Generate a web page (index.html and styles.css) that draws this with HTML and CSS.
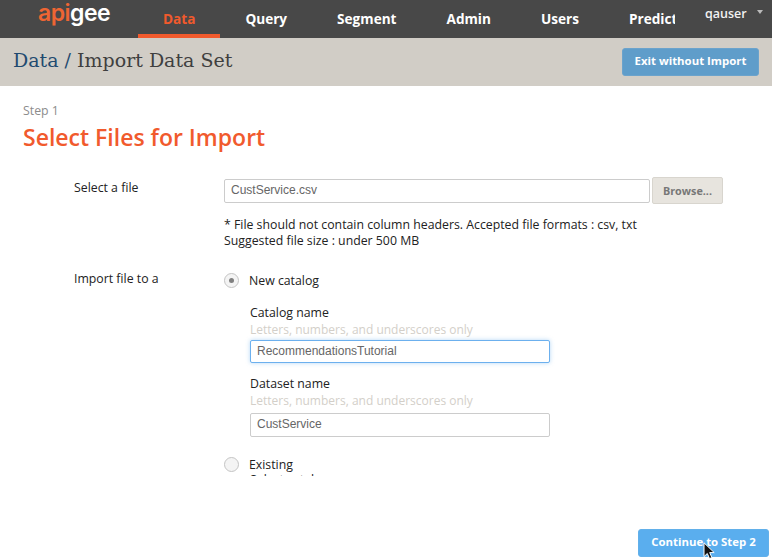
FILE: index.html
```html
<!DOCTYPE html>
<html>
  <head>
    <title>Import Data Set</title>
    <link rel="stylesheet" href="styles.css">
  </head>
  <body>
    <header class="topbar">
      <div class="logo"><span class="logo-api">api</span><span class="logo-gee">gee</span></div>
      <nav class="nav">
        <a class="nav-item active">Data</a>
        <a class="nav-item">Query</a>
        <a class="nav-item">Segment</a>
        <a class="nav-item">Admin</a>
        <a class="nav-item">Users</a>
        <a class="nav-item">Predict</a>
      </nav>
      <div class="user">qauser<span class="caret"></span></div>
    </header>

    <div class="subbar">
      <h2 class="crumbs"><span class="crumb-link">Data /</span> Import Data Set</h2>
      <button class="btn btn-exit">Exit without Import</button>
    </div>

    <main class="content">
      <p class="step">Step 1</p>
      <h1 class="title">Select Files for Import</h1>

      <div class="form-row file-row">
        <label class="row-label">Select a file</label>
        <div class="row-body">
          <div class="file-picker">
            <input class="text-input file-input" type="text" value="CustService.csv">
            <button class="browse">Browse...</button>
          </div>
          <p class="note">* File should not contain column headers. Accepted file formats : csv, txt<br>Suggested file size : under 500 MB</p>
        </div>
      </div>

      <div class="form-row">
        <label class="row-label">Import file to a</label>
        <div class="row-body">
          <div class="radio-row">
            <span class="radio checked"></span>
            <span>New catalog</span>
          </div>
          <div class="names">
            <div class="name-label">Catalog name</div>
            <div class="name-hint">Letters, numbers, and underscores only</div>
            <input class="text-input name-input focused" type="text" value="RecommendationsTutorial">
            <div class="name-label second">Dataset name</div>
            <div class="name-hint">Letters, numbers, and underscores only</div>
            <input class="text-input name-input dataset" type="text" value="CustService">
          </div>
          <div class="radio-row existing">
            <span class="radio"></span>
            <span>Existing</span>
          </div>
          <div class="name-label clipped">Select catalog</div>
        </div>
      </div>
    </main>

    <footer class="footer">
      <button class="btn btn-continue">Continue to Step 2</button>
      <svg class="cursor" width="12" height="18" viewBox="0 0 12 18">
        <path d="M1 0.8V14.6L4.3 11.5L6.5 16.6L8.9 15.6L6.7 10.6H11.2Z" fill="#111" stroke="#fff" stroke-width="1"/>
      </svg>
    </footer>
  </body>
</html>
```

FILE: styles.css
```css
html, body {
  margin: 0;
  height: 560px;
  overflow: hidden;
  background-color: #fff;
  font-family: "Open Sans", sans-serif;
  font-size: 12.3px;
  color: #222;
}

.topbar {
  display: flex;
  height: 38px;
  background-color: #484848;
  position: relative;
}

.logo {
  width: 138px;
  padding-left: 38px;
  box-sizing: border-box;
  font-family: "Inter", sans-serif;
  font-size: 23px;
  font-weight: 600;
  letter-spacing: -0.5px;
  line-height: 27px;
}

.logo-api {
  color: #ee6533;
}

.logo-gee {
  color: #fff;
}

.nav {
  display: flex;
  width: 537px;
  overflow: hidden;
}

.nav-item {
  padding: 0 25px;
  height: 38px;
  box-sizing: border-box;
  line-height: 38px;
  font-size: 13.6px;
  font-weight: 700;
  color: #fff;
}

.nav-item.active {
  color: #f15a2d;
  border-bottom: 4px solid #f15a2d;
}

.user {
  margin-left: 30px;
  padding-top: 5px;
  font-size: 12.5px;
  font-weight: 600;
  line-height: 18px;
  color: #f2f2f2;
}

.caret {
  position: absolute;
  left: 757px;
  top: 10px;
  border-left: 3px solid transparent;
  border-right: 3px solid transparent;
  border-top: 4px solid #bbb;
}

.subbar {
  display: flex;
  justify-content: space-between;
  align-items: center;
  height: 48px;
  padding: 0 13px;
  background-color: #d1cdc6;
}

.crumbs {
  margin: 0 0 5px;
  font-family: "DejaVu Serif", serif;
  font-size: 19px;
  font-weight: 400;
  color: #3f3f3f;
}

.crumb-link {
  color: #1f4a70;
}

.btn {
  padding: 0 0 3px;
  border: 1px solid transparent;
  border-radius: 3px;
  font-family: "Open Sans", sans-serif;
  font-size: 11.4px;
  font-weight: 700;
  color: #fff;
}

.btn-exit {
  width: 137px;
  height: 28px;
  background-color: #5f9dca;
  border-color: #6ba3cc;
}

.content {
  height: 374px;
  padding: 16px 23px 0;
  overflow: hidden;
}

.step {
  margin: 0;
  line-height: 17px;
  color: #8c8c8c;
}

.title {
  margin: 3px 0 0;
  font-size: 23px;
  font-weight: 600;
  line-height: 30px;
  color: #f15a2d;
}

.form-row {
  display: flex;
  padding-left: 51px;
}

.file-row {
  margin-top: 27px;
}

.row-label {
  width: 150px;
  flex-shrink: 0;
  line-height: 17px;
}

.file-picker {
  display: flex;
  align-items: center;
  gap: 2px;
  margin-top: -2px;
}

.text-input {
  box-sizing: border-box;
  padding: 0 6px 2px;
  border: 1px solid #ccc;
  border-radius: 2px;
  font-family: "Liberation Sans", sans-serif;
  font-size: 12px;
  color: #666;
  outline: none;
}

.file-input {
  width: 426px;
  height: 24px;
}

.browse {
  width: 71px;
  height: 27px;
  padding: 0;
  background-color: #e7e4de;
  border: 1px solid #d8d5ce;
  border-radius: 2px;
  font-family: "Open Sans", sans-serif;
  font-size: 10.8px;
  font-weight: 700;
  color: #777;
}

.note {
  margin: 13px 0 0;
  line-height: 16px;
}

.form-row + .form-row {
  margin-top: 21px;
}

.radio-row {
  display: flex;
  align-items: center;
  gap: 10px;
  margin-top: 2px;
  line-height: 17px;
}

.radio {
  box-sizing: border-box;
  width: 15px;
  height: 15px;
  border: 1px solid #c4c4c4;
  border-radius: 50%;
  background-color: #f4f4f4;
  display: flex;
  align-items: center;
  justify-content: center;
}

.radio.checked::after {
  content: "";
  width: 5px;
  height: 5px;
  border-radius: 50%;
  background-color: #808080;
}

.names {
  margin: 15px 0 0 26px;
}

.name-label {
  line-height: 17px;
}

.name-label.second {
  margin-top: 12px;
}

.name-hint {
  font-size: 12px;
  line-height: 17px;
  color: #d3cfc9;
}

.name-input {
  display: block;
  width: 300px;
  height: 24px;
  margin-top: 2px;
}

.name-input.focused {
  height: 23px;
  border-color: #6cb0ee;
  box-shadow: 0 0 4px rgba(108, 176, 238, 0.5);
}

.name-input.dataset {
  margin-top: 4px;
}

.radio-row.existing {
  margin-top: 19px;
}

.clipped {
  margin: -2px 0 0 26px;
}

.footer {
  position: relative;
  display: flex;
  justify-content: flex-end;
  padding: 0 3px 0 0;
  margin-top: 53px;
}

.btn-continue {
  width: 131px;
  height: 28px;
  background-color: #5aaeee;
  border-color: #62b0ea;
}

.cursor {
  position: absolute;
  left: 703px;
  top: 13px;
}
```
